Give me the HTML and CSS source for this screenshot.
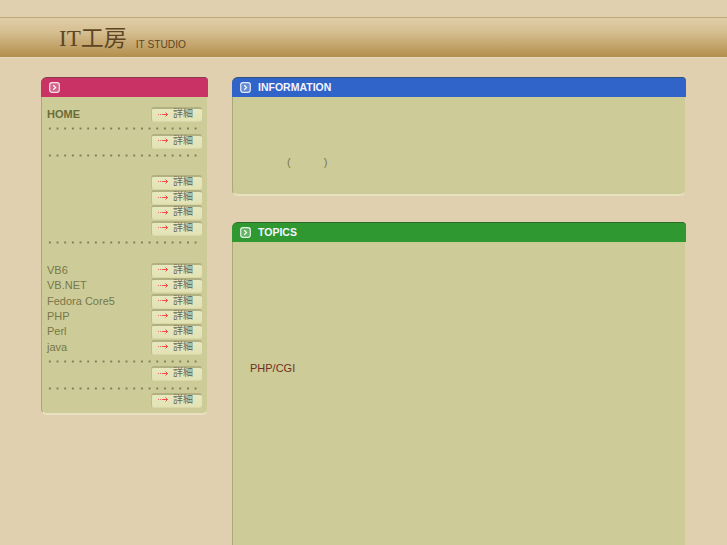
FILE: index.html
```html
<!DOCTYPE html>
<html lang="ja">
<head>
    <meta charset="UTF-8">
    <title>IT工房</title>
    <link rel="stylesheet" href="styles.css">
</head>
<body>
    <svg class="defs" width="0" height="0">
        <symbol id="mark" viewBox="0 0 11 11">
            <rect x="0.7" y="0.7" width="9.6" height="9.6" rx="2.2" fill="#fff" fill-opacity="0.25" stroke="#fff" stroke-width="1.2" stroke-opacity="0.85"/>
            <path d="M4.2 3.2 6.6 5.5 4.2 7.8" fill="none" stroke="#fff" stroke-width="1.2"/>
        </symbol>
        <symbol id="go" viewBox="0 0 10 7">
            <path d="M0 3h1M2 3h1M4 3h1" stroke="#f86060" stroke-width="1" fill="none" shape-rendering="crispEdges"/>
            <path d="M5 3.5h4.5M7.5 1.5l2 2-2 2" stroke="#f04848" stroke-width="1" fill="none"/>
        </symbol>
    </svg>

    <div class="header">
        <h1>IT工房</h1>
        <span class="sub">IT STUDIO</span>
    </div>

    <div class="page">
        <!-- left menu -->
        <div class="side panel">
            <div class="panel-title pink"><svg class="mark"><use href="#mark"/></svg></div>
            <div class="menu">
                <div class="row"><b>HOME</b><a class="more"><svg class="go"><use href="#go"/></svg>詳細</a></div>
                <div class="dots"></div>
                <div class="row"><span></span><a class="more"><svg class="go"><use href="#go"/></svg>詳細</a></div>
                <div class="dots"></div>
                <div class="space"></div>
                <div class="row"><span></span><a class="more"><svg class="go"><use href="#go"/></svg>詳細</a></div>
                <div class="row"><span></span><a class="more"><svg class="go"><use href="#go"/></svg>詳細</a></div>
                <div class="row"><span></span><a class="more"><svg class="go"><use href="#go"/></svg>詳細</a></div>
                <div class="row"><span></span><a class="more"><svg class="go"><use href="#go"/></svg>詳細</a></div>
                <div class="dots"></div>
                <div class="space wide"></div>
                <div class="row"><span>VB6</span><a class="more"><svg class="go"><use href="#go"/></svg>詳細</a></div>
                <div class="row"><span>VB.NET</span><a class="more"><svg class="go"><use href="#go"/></svg>詳細</a></div>
                <div class="row"><span>Fedora Core5</span><a class="more"><svg class="go"><use href="#go"/></svg>詳細</a></div>
                <div class="row"><span>PHP</span><a class="more"><svg class="go"><use href="#go"/></svg>詳細</a></div>
                <div class="row"><span>Perl</span><a class="more"><svg class="go"><use href="#go"/></svg>詳細</a></div>
                <div class="row"><span>java</span><a class="more"><svg class="go"><use href="#go"/></svg>詳細</a></div>
                <div class="dots short"></div>
                <div class="row"><span></span><a class="more"><svg class="go"><use href="#go"/></svg>詳細</a></div>
                <div class="dots short"></div>
                <div class="row"><span></span><a class="more"><svg class="go"><use href="#go"/></svg>詳細</a></div>
            </div>
        </div>

        <div class="main">
            <div class="panel info">
                <div class="panel-title blue"><svg class="mark"><use href="#mark"/></svg>INFORMATION</div>
                <div class="note"><span>(</span><span>)</span></div>
            </div>
            <div class="panel topics">
                <div class="panel-title green"><svg class="mark"><use href="#mark"/></svg>TOPICS</div>
                <p class="topic">PHP/CGI</p>
            </div>
        </div>
    </div>
</body>
</html>
```

FILE: styles.css
```css
html, body {
    height: 545px;
    overflow: hidden;
}
body {
    margin: 0;
    background-color: #e0d0b0;
    font-family: "Liberation Sans", "Noto Sans CJK JP", sans-serif;
    color: #77774a;
}
.defs {
    display: block;
    height: 0;
}
.header {
    margin-top: 17px;
    height: 39px;
    padding-left: 59px;
    display: flex;
    align-items: center;
    gap: 9px;
    border-top: 1px solid #c0a878;
    border-bottom: 1px solid #e6d8bc;
    background: linear-gradient(#e0cda8, #d6bf92 35%, #b38f4c);
    color: #5e4524;
}
.header h1 {
    margin: 0;
    padding-top: 2px;
    font-family: "Liberation Serif", "Noto Sans CJK JP", serif;
    font-size: 23px;
    font-weight: normal;
    line-height: 37px;
}
.sub {
    font-size: 10.2px;
    padding-top: 13px;
}
.page {
    display: flex;
    align-items: flex-start;
    gap: 24px;
    margin: 19px 41px 0;
}
.panel {
    background-color: #cdcc98;
    border-left: 1px solid #a8a878;
    border-right: 1px solid #d8d6a8;
    border-bottom: 2px solid #e6e2c0;
    border-radius: 6px;
}
.side {
    width: 165px;
    height: 336px;
    flex-shrink: 0;
}
.main {
    width: 454px;
    display: flex;
    flex-direction: column;
    gap: 26px;
}
.panel-title {
    height: 18px;
    margin: 0 -1px;
    padding: 0 0 1px 8px;
    display: flex;
    align-items: center;
    gap: 7px;
    border-top: 1px solid #777;
    border-radius: 6px 4px 0 0;
    color: #f4f4ff;
    font-size: 10.5px;
    font-weight: bold;
}
.pink { background-color: #c83264; border-top-color: #8a3a50; }
.blue { background-color: #3064c8; border-top-color: #34507c; }
.green { background-color: #309830; border-top-color: #2c6a2c; }
.mark {
    width: 11px;
    height: 11px;
}
.menu {
    padding: 10px 5px 0 5px;
}
.row {
    height: 15.43px;
    display: flex;
    justify-content: space-between;
    align-items: flex-start;
    font-size: 11px;
    line-height: 14px;
}
.row b {
    color: #6b6b3a;
}
.more {
    box-sizing: border-box;
    width: 51px;
    height: 15px;
    display: flex;
    align-items: center;
    gap: 5px;
    padding: 0 0 2px 6px;
    border-top: 2px solid #b0b080;
    border-left: 1px solid #bcbc8c;
    border-bottom: 1px solid #d8d8a8;
    border-radius: 3px;
    background: linear-gradient(#e8e8c0, #e2e2b4);
    color: #666658;
    font-size: 10px;
}
.go {
    width: 10px;
    height: 7px;
}
.dots {
    width: 153.6px;
    height: 11.4px;
    margin-left: -1px;
    background-image: radial-gradient(circle, #7d7d55 1px, transparent 1.2px);
    background-size: 7.68px 3px;
    background-repeat: repeat-x;
    background-position: 0 5px;
}
.dots.short {
    height: 11px;
}
.space {
    height: 14px;
}
.space.wide {
    height: 15px;
}
.note {
    height: 97px;
    box-sizing: border-box;
    padding: 59px 0 0 54px;
    display: flex;
    gap: 33px;
    font-size: 11px;
    line-height: 13px;
}
.topics {
    height: 340px;
}
.topic {
    margin: 120px 0 0 17px;
    color: #703020;
    font-size: 11px;
}
```
